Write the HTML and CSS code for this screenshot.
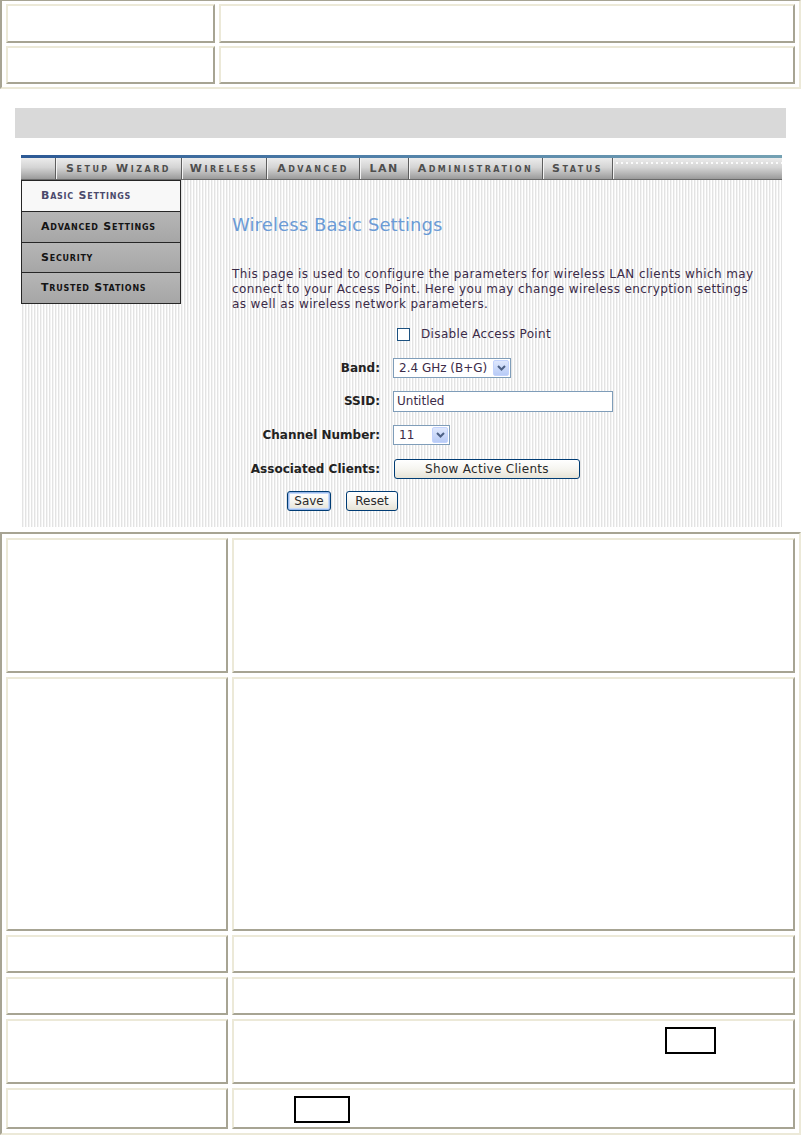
FILE: index.html
```html
<!DOCTYPE html>
<html lang="en">
<head>
<meta charset="utf-8">
<title>Wireless Basic Settings</title>
<link rel="stylesheet" href="styles.css">
</head>
<body>
<div class="doc-table top-table">
  <div class="cell"></div><div class="cell"></div>
  <div class="cell"></div><div class="cell"></div>
</div>

<div class="section-bar"></div>

<div class="router">
  <div class="topline"></div>
  <nav class="tabs">
    <div class="tab t-blank"></div>
    <div class="tab t-setup">Setup Wizard</div>
    <div class="tab t-wireless">Wireless</div>
    <div class="tab t-advanced">Advanced</div>
    <div class="tab t-lan">LAN</div>
    <div class="tab t-admin">Administration</div>
    <div class="tab t-status">Status</div>
    <div class="tab t-fill"></div>
  </nav>
  <div class="router-body">
    <ul class="side-menu">
      <li class="active">Basic Settings</li>
      <li>Advanced Settings</li>
      <li>Security</li>
      <li>Trusted Stations</li>
    </ul>
    <main class="content">
      <h1 class="title">Wireless Basic Settings</h1>
      <p class="intro">This page is used to configure the parameters for wireless LAN clients which may connect to your Access Point. Here you may change wireless encryption settings as well as wireless network parameters.</p>
      <div class="form">
        <div class="label"></div>
        <div class="ctrl"><span class="checkbox"></span><span class="check-text">Disable Access Point</span></div>

        <div class="label">Band:</div>
        <div class="ctrl"><div class="select band"><span class="sel-text">2.4 GHz (B+G)</span><span class="sel-btn"><svg width="9" height="6" viewBox="0 0 9 6"><polyline points="1,1 4.5,4.5 8,1" fill="none" stroke="#4d6185" stroke-width="2"/></svg></span></div></div>

        <div class="label">SSID:</div>
        <div class="ctrl"><div class="text-input">Untitled</div></div>

        <div class="label">Channel Number:</div>
        <div class="ctrl"><div class="select channel"><span class="sel-text">11</span><span class="sel-btn"><svg width="9" height="6" viewBox="0 0 9 6"><polyline points="1,1 4.5,4.5 8,1" fill="none" stroke="#4d6185" stroke-width="2"/></svg></span></div></div>

        <div class="label">Associated Clients:</div>
        <div class="ctrl"><button class="btn btn-clients" type="button">Show Active Clients</button></div>
      </div>
      <div class="actions">
        <button class="btn btn-save" type="button">Save</button>
        <button class="btn btn-reset" type="button">Reset</button>
      </div>
    </main>
  </div>
</div>

<div class="doc-table bottom-table">
  <div class="cell"></div><div class="cell"></div>
  <div class="cell"></div><div class="cell"></div>
  <div class="cell"></div><div class="cell"></div>
  <div class="cell"></div><div class="cell"></div>
  <div class="cell"></div><div class="cell cell-save"><span class="ph ph-save"></span></div>
  <div class="cell"></div><div class="cell cell-reset"><span class="ph ph-reset"></span></div>
</div>
</body>
</html>
```

FILE: styles.css
```css
html, body {
  margin: 0;
  padding: 0;
  background: #ffffff;
}
body {
  font-family: "DejaVu Sans", Verdana, sans-serif;
  width: 801px;
  height: 1135px;
  overflow: hidden;
}

/* ---------- document tables ---------- */
.doc-table {
  display: grid;
  box-sizing: border-box;
  width: 801px;
  border-style: solid;
  border-color: #a7a493 #ece9d8 #ece9d8 #a7a493;
}
.cell {
  box-sizing: border-box;
  border: 2px solid;
  border-color: #ece9d8 #a7a493 #a7a493 #ece9d8;
  background: #ffffff;
}
.top-table {
  border-width: 1px 2px 2px 2px;
  padding: 3px 4px;
  gap: 3px 4px;
  grid-template-columns: 209px 576px;
  grid-template-rows: 38.5px 38.5px;
}
.bottom-table {
  margin-top: 5px;
  border-width: 2px;
  padding: 4px;
  gap: 4px;
  grid-template-columns: 222px 563px;
  grid-template-rows: 135px 254px 38px 38px 65px 41px;
}
.ph {
  display: block;
  box-sizing: border-box;
  height: 27px;
  border: 2px solid #000;
}
.cell-save { padding: 6px 0 0 431px; }
.ph-save { width: 51px; }
.cell-reset { padding: 6px 0 0 60px; }
.ph-reset { width: 56px; }

/* ---------- grey section bar ---------- */
.section-bar {
  margin: 19px 0 0 15px;
  width: 771px;
  height: 30px;
  background: #d9d9d9;
}

/* ---------- router screenshot ---------- */
.router {
  margin: 17px 0 0 21px;
  width: 761px;
  height: 372px;
  display: flex;
  flex-direction: column;
}
.topline {
  height: 3px;
  background: linear-gradient(90deg, #2c5995 0%, #4f7fa8 45%, #74a1b3 100%);
}
.tabs {
  display: flex;
  height: 22px;
}
.tab {
  box-sizing: border-box;
  height: 22px;
  border-left: 1px solid #5e5e5e;
  border-bottom: 1px solid #6a6a6a;
  background: linear-gradient(#ececec 0%, #d4d4d4 45%, #b0b0b0 80%, #9a9a9a 100%);
  font-weight: bold;
  font-size: 11px;
  line-height: 21px;
  font-variant: small-caps;
  letter-spacing: 2.5px;
  color: #4e4e4e;
  text-align: center;
  white-space: nowrap;
  overflow: hidden;
  box-shadow: inset 1px 0 0 #f4f4f4;
}
.t-blank { width: 34px; border-left: 0; box-shadow: none; }
.t-setup { width: 126px; }
.t-wireless { width: 85px; }
.t-advanced { width: 93px; }
.t-lan { width: 49px; letter-spacing: 1.5px; }
.t-admin { width: 134px; }
.t-status { width: 70px; }
.t-fill {
  flex: 1;
  background:
    linear-gradient(90deg, rgba(255,255,255,0.85) 0 2px, transparent 2px 5px) 3px 4px / 5px 2px repeat-x,
    linear-gradient(#ececec 0%, #d4d4d4 45%, #b0b0b0 80%, #9a9a9a 100%);
}

.router-body {
  flex: 1;
  display: flex;
  align-items: flex-start;
  background: repeating-linear-gradient(90deg, #ffffff 0 1px, #e3e3e3 1px 2px, #f4f4f4 2px 3px);
}

.side-menu {
  list-style: none;
  margin: 0;
  padding: 0;
  width: 160px;
  flex: none;
  box-sizing: border-box;
  border: 1px solid #262626;
  border-top: 0;
}
.side-menu li {
  box-sizing: border-box;
  height: 30.75px;
  line-height: 30px;
  padding-left: 19px;
  border-top: 1px solid #262626;
  background: linear-gradient(#b6b6b6, #a6a6a6);
  font-weight: bold;
  font-size: 11px;
  font-variant: small-caps;
  letter-spacing: 0.75px;
  color: #141414;
  white-space: nowrap;
}
.side-menu li.active {
  background: #f8f8f8;
  color: #4b4a6c;
}

.content {
  flex: 1;
  padding-left: 51px;
  color: #3b2b48;
}
.title {
  margin: 0;
  padding-top: 35px;
  font-weight: normal;
  font-size: 18px;
  line-height: 20px;
  letter-spacing: 0.1px;
  color: #6b9bd6;
}
.intro {
  margin: 31.5px 0 0;
  width: 528px;
  font-size: 12px;
  line-height: 15px;
  letter-spacing: 0.4px;
}

.form {
  margin-top: 6px;
  display: grid;
  grid-template-columns: 148px auto;
  grid-auto-rows: 33.6px;
  column-gap: 13px;
  align-items: center;
}
.label {
  text-align: right;
  font-weight: bold;
  font-size: 12px;
  color: #222222;
  white-space: nowrap;
}
.ctrl {
  display: flex;
  align-items: center;
  font-size: 12px;
}
.checkbox {
  box-sizing: border-box;
  width: 13px;
  height: 13px;
  margin-left: 4px;
  border: 1px solid #1c5180;
  background: #ffffff;
}
.check-text {
  margin-left: 11px;
  letter-spacing: 0.35px;
}
.select {
  box-sizing: border-box;
  height: 20px;
  border: 1px solid #7f9db9;
  background: #ffffff;
  display: flex;
  align-items: center;
  padding: 1px;
}
.sel-text {
  flex: 1;
  padding-left: 4px;
  white-space: nowrap;
}
.sel-btn {
  box-sizing: border-box;
  width: 16px;
  height: 16px;
  border: 1px solid #c3d3fd;
  border-radius: 2px;
  background: linear-gradient(#dfe8fd, #b8cbf6);
  display: flex;
  align-items: center;
  justify-content: center;
}
.band { width: 118px; }
.channel { width: 57px; }
.text-input {
  box-sizing: border-box;
  width: 220px;
  height: 21px;
  border: 1px solid #7f9db9;
  background: #ffffff;
  padding-left: 3px;
  line-height: 19px;
}

.btn {
  box-sizing: border-box;
  height: 20px;
  padding: 0;
  border: 1px solid #003c74;
  border-radius: 3px;
  background: linear-gradient(#ffffff 0%, #f6f5f0 50%, #e6e3d6 100%);
  font-family: "DejaVu Sans", Verdana, sans-serif;
  font-size: 12px;
  color: #2a2a2a;
  line-height: 18px;
  text-align: center;
}
.btn-clients { width: 186px; margin-left: 1px; letter-spacing: 0.3px; }
.actions {
  margin: 6px 0 0 55px;
  display: flex;
  gap: 15px;
}
.btn-save {
  width: 44px;
  box-shadow: inset 0 0 0 1px #98b8ea, inset 0 0 0 2px #c7dafa;
}
.btn-reset { width: 52px; }
```
